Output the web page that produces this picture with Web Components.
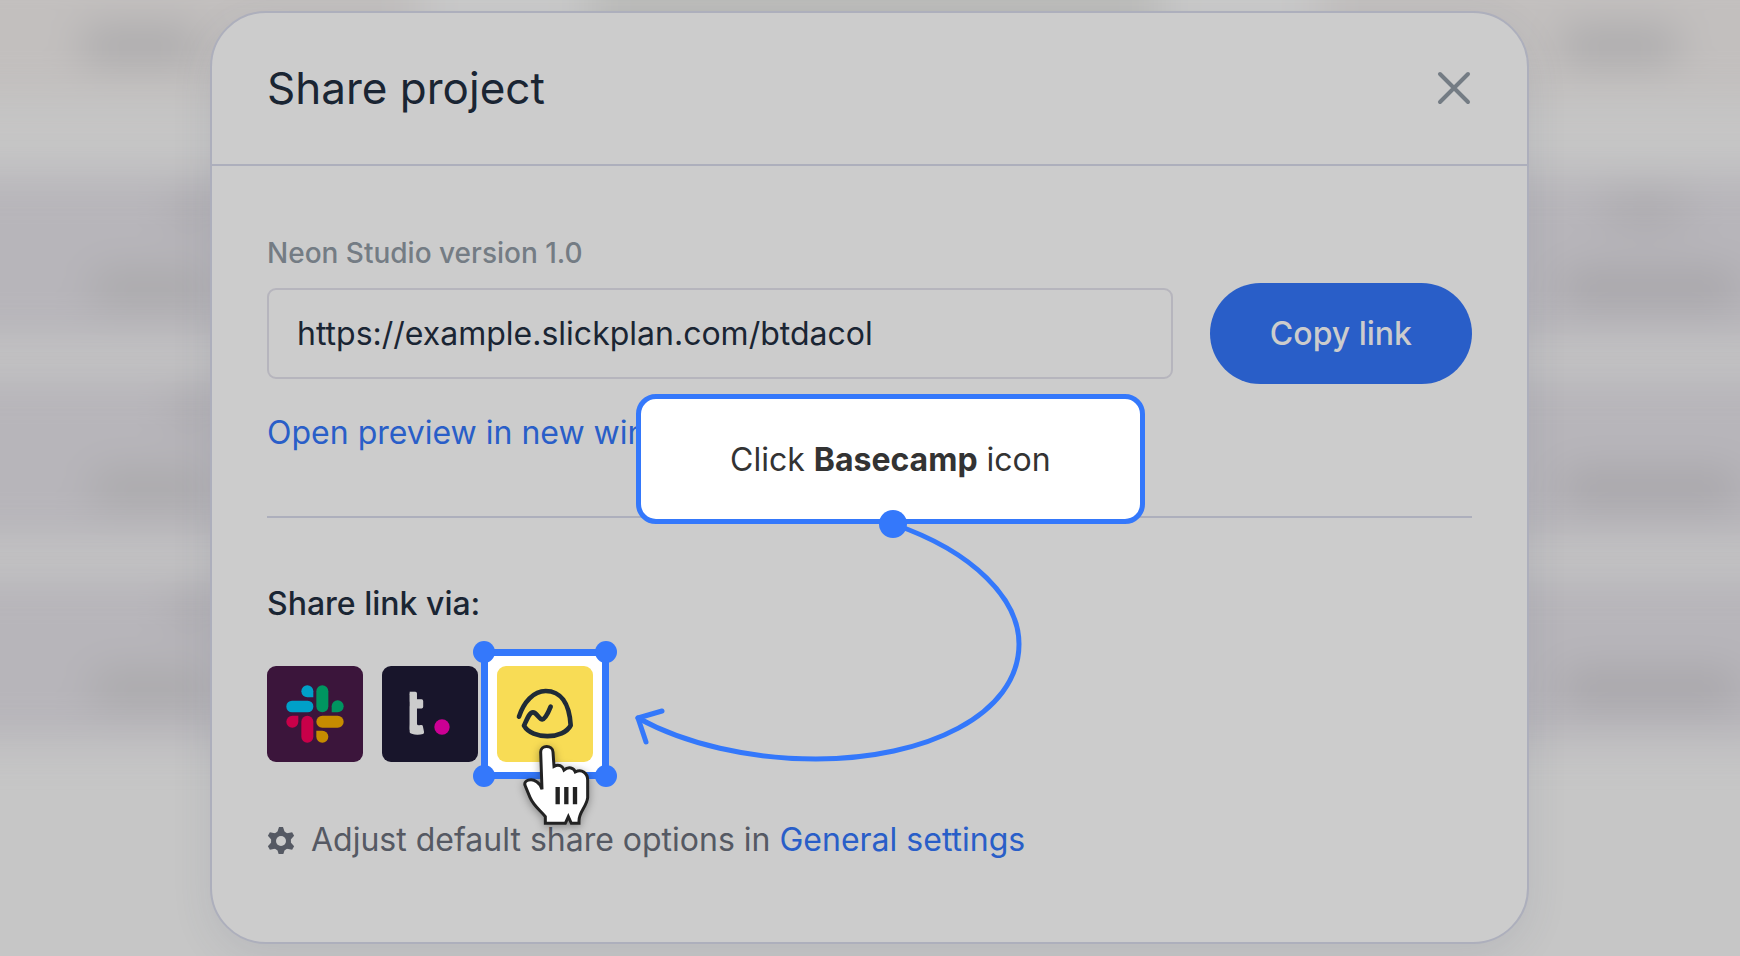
<!DOCTYPE html>
<html lang="en">
<head>
<meta charset="utf-8">
<title>Share project</title>
<style>
  body {
    margin: 0;
    min-height: 100vh;
    display: grid;
    background-color: #c6c6c6;
    font-family: Inter, "Liberation Sans", sans-serif;
    color: #1a2533;
  }
  page-backdrop, share-dialog {
    grid-area: 1 / 1;
  }
  share-dialog {
    margin: 11px 211px 12px 210px;
  }
</style>
</head>
<body>

<page-backdrop aria-hidden="true"></page-backdrop>

<share-dialog heading="Share project">
  <link-field label="Neon Studio version 1.0" value="https://example.slickplan.com/btdacol"></link-field>
  <share-apps heading="Share link via:">
    <app-tile app="slack"></app-tile>
    <app-tile app="teams"></app-tile>
    <app-tile app="basecamp" active></app-tile>
  </share-apps>
  <share-note>Adjust default share options in <a href="#settings">General settings</a></share-note>
  <tour-step slot="tour">Click <b>Basecamp</b> icon</tour-step>
</share-dialog>

<script>
function makeTemplate(html) {
  const template = document.createElement('template');
  template.innerHTML = html;
  return template;
}

// blurred page behind the dialog
const backdropTemplate = makeTemplate(`
<style>
  :host {
    display: block;
    overflow: hidden;
  }
  .page {
    filter: blur(20px);
    margin: -40px -60px 0;
  }
  .top {
    display: flex;
    justify-content: space-between;
    align-items: center;
    height: 140px;
    padding: 30px 120px 0 140px;
    box-sizing: border-box;
    background: linear-gradient(90deg, #c2bfbe 460px, #cacaca 500px, #cacaca 630px, #bcbcba 670px, #bcbcba 1200px, #cacaca 1240px, #cacaca 1360px, #c2bfbe 1400px);
  }
  .rows {
    display: flex;
    flex-direction: column;
    gap: 34px;
    padding-top: 75px;
  }
  .row {
    display: flex;
    justify-content: space-between;
    height: 166px;
    padding: 0 60px 0 150px;
    background-color: #b7b5ba;
  }
  .cell {
    display: flex;
    flex-direction: column;
    gap: 44px;
    padding-top: 18px;
  }
  .left {
    align-items: flex-end;
  }
  i {
    display: block;
    width: 120px;
    height: 34px;
    border-radius: 16px;
    background-color: #a9a8aa;
  }
  .faint {
    width: 40px;
    background-color: #acaaae;
  }
  .none {
    visibility: hidden;
  }
  .right i {
    width: 180px;
    background-color: #a6a4a8;
  }
  .right .faint {
    width: 90px;
    margin-left: 40px;
    background-color: #acaaae;
  }
</style>
<div class="page">
  <div class="top"><i></i><i></i></div>
  <div class="rows">
    <div class="row">
      <div class="cell left"><i class="faint"></i><i></i></div>
      <div class="cell right"><i class="faint"></i><i></i></div>
    </div>
    <div class="row">
      <div class="cell left"><i class="faint"></i><i></i></div>
      <div class="cell right"><i class="none"></i><i></i></div>
    </div>
    <div class="row">
      <div class="cell left"><i class="faint"></i><i></i></div>
      <div class="cell right"><i class="none"></i><i></i></div>
    </div>
  </div>
</div>
`);

customElements.define(
  "page-backdrop",
  class PageBackdrop extends HTMLElement {
    constructor() {
      super();
      this.attachShadow({ mode: "open" }).appendChild(backdropTemplate.content.cloneNode(true));
    }
  }
);

const dialogTemplate = makeTemplate(`
<style>
  :host {
    display: block;
    position: relative;
    box-sizing: border-box;
    border: 2px solid #adafbc;
    border-radius: 56px;
    background-color: #ccc;
    box-shadow: 0 12px 40px rgba(70, 75, 110, 0.1);
  }
  header {
    display: flex;
    justify-content: space-between;
    align-items: center;
    padding: 47px 55px 48px;
    border-bottom: 2px solid #adafbc;
  }
  h1 {
    margin: 0;
    font-size: 44px;
    line-height: 56px;
    font-weight: 400;
  }
  button {
    display: block;
    padding: 0;
    border: 0;
    background: none;
    color: #747c84;
  }
  button svg {
    display: block;
    width: 36px;
    height: 36px;
  }
  .body {
    padding: 70px 55px 82px;
  }
</style>
<header>
  <h1></h1>
  <button type="button" aria-label="Close">
    <svg viewBox="0 0 36 36" fill="none" stroke="currentColor" stroke-width="4" stroke-linecap="round">
      <path d="M4 4 L32 32 M32 4 L4 32"/>
    </svg>
  </button>
</header>
<div class="body"><slot></slot></div>
<slot name="tour"></slot>
`);

customElements.define(
  "share-dialog",
  class ShareDialog extends HTMLElement {
    constructor() {
      super();
      this.attachShadow({ mode: "open" }).appendChild(dialogTemplate.content.cloneNode(true));
    }

    connectedCallback() {
      this.setAttribute("role", "dialog");
      this.shadowRoot.querySelector("h1").textContent = this.getAttribute("heading");
    }
  }
);

const linkTemplate = makeTemplate(`
<style>
  :host {
    display: block;
    padding-bottom: 63px;
    border-bottom: 2px solid #adafbc;
  }
  label {
    display: block;
    margin-bottom: 13px;
    font-size: 28px;
    line-height: 34px;
    font-weight: 500;
    color: #747c84;
  }
  .row {
    display: flex;
    align-items: center;
    gap: 37px;
    margin-bottom: 29px;
  }
  input {
    flex: 1;
    min-width: 0;
    box-sizing: border-box;
    height: 91px;
    padding: 0 28px;
    border: 2px solid #b6b5bd;
    border-radius: 9px;
    background: none;
    color: inherit;
    font: 32px/40px Inter, "Liberation Sans", sans-serif;
  }
  button {
    height: 101px;
    padding: 0 60px;
    border: 0;
    border-radius: 51px;
    background-color: #295ec8;
    color: #ccc;
    font: 500 32px/40px Inter, "Liberation Sans", sans-serif;
  }
  a {
    font-size: 32px;
    line-height: 40px;
    color: #295ec8;
    text-decoration: none;
    display: inline-block;
    vertical-align: top;
  }
</style>
<label for="link"></label>
<div class="row">
  <input id="link" type="text" readonly>
  <button type="button">Copy link</button>
</div>
<a href="#preview">Open preview in new window</a>
`);

customElements.define(
  "link-field",
  class LinkField extends HTMLElement {
    constructor() {
      super();
      this.attachShadow({ mode: "open" }).appendChild(linkTemplate.content.cloneNode(true));
    }

    connectedCallback() {
      this.shadowRoot.querySelector("label").textContent = this.getAttribute("label");
      this.shadowRoot.querySelector("input").value = this.getAttribute("value");
    }
  }
);

const appsTemplate = makeTemplate(`
<style>
  :host {
    display: block;
    padding-top: 66px;
  }
  h2 {
    margin: 0 0 42px;
    font-size: 32px;
    line-height: 40px;
    font-weight: 500;
  }
  .tiles {
    display: flex;
    gap: 19px;
  }
</style>
<h2></h2>
<div class="tiles"><slot></slot></div>
`);

customElements.define(
  "share-apps",
  class ShareApps extends HTMLElement {
    constructor() {
      super();
      this.attachShadow({ mode: "open" }).appendChild(appsTemplate.content.cloneNode(true));
    }

    connectedCallback() {
      this.shadowRoot.querySelector("h2").textContent = this.getAttribute("heading");
    }
  }
);

const apps = {
  slack: {
    label: "Slack",
    color: "#3b153b",
    art: `
      <g fill="#00a0c8"><rect x="58" y="104" width="81" height="35" rx="17"/><path d="M139 94 H121 A18 18 0 1 1 139 76 Z"/></g>
      <g fill="#009560"><rect x="148" y="58" width="36" height="81" rx="18"/><path d="M194 139 V121 A18 18 0 1 1 212 139 Z"/></g>
      <g fill="#c80049"><rect x="103" y="149" width="36" height="81" rx="18"/><path d="M94 149 V167 A18 18 0 1 1 76 149 Z"/></g>
      <g fill="#c68c00"><rect x="148" y="149" width="82" height="36" rx="18"/><path d="M148 194 H166 A18 18 0 1 1 148 212 Z"/></g>`
  },
  teams: {
    label: "Teams",
    color: "#18152b",
    art: `
      <clipPath id="stem"><rect x="83" y="60" width="60" height="160" rx="10"/></clipPath>
      <text x="62" y="200" clip-path="url(#stem)" font-family="Inter" font-size="176" font-weight="600" fill="#ccc" stroke="#ccc" stroke-width="10" stroke-linejoin="round">t</text>
      <circle cx="180" cy="183" r="23" fill="#cc0094"/>`
  },
  basecamp: {
    label: "Basecamp",
    color: "#f8dc55",
    art: `
      <path fill="none" stroke="#1f2b37" stroke-width="14" stroke-linecap="round" stroke-linejoin="round"
        d="M66 152 C80 108 110 75 146 75 C190 75 217 110 221 178 C200 220 105 222 81 179 C92 155 98 139 108 139 C119 139 126 160 136 160 C143 160 153 142 161 122"/>`
  }
};

const tileTemplate = makeTemplate(`
<style>
  :host {
    display: block;
    position: relative;
  }
  button {
    display: block;
    position: relative;
    padding: 0;
    border: 0;
    border-radius: 9px;
    overflow: hidden;
  }
  button svg {
    display: block;
    width: 96px;
    height: 96px;
  }
  .frame, .cursor {
    display: none;
  }
  :host([active]) .frame {
    display: block;
    position: absolute;
    inset: -17px -16px;
    box-sizing: border-box;
    border: 7px solid #3478fb;
    background-color: #fff;
  }
  .frame i {
    position: absolute;
    width: 22px;
    height: 22px;
    border-radius: 50%;
    background-color: #3478fb;
  }
  .tl { top: -15px; left: -15px; }
  .tr { top: -15px; right: -15px; }
  .bl { bottom: -15px; left: -15px; }
  .br { bottom: -15px; right: -15px; }
  :host([active]) .cursor {
    display: block;
    position: absolute;
    top: 76px;
    left: 23px;
    width: 73px;
    height: 87px;
    overflow: visible;
    z-index: 2;
    filter: drop-shadow(0 2px 4px rgba(0, 0, 0, 0.35));
  }
</style>
<div class="frame"><i class="tl"></i><i class="tr"></i><i class="bl"></i><i class="br"></i></div>
<button type="button"><svg viewBox="0 0 288 288"></svg></button>
<svg class="cursor" viewBox="180 336 219 261" aria-hidden="true">
  <path fill="#fff" stroke="#222" stroke-width="9"
    d="M242 366 C242 344 278 344 279 366 L282 409 C296 401 308 408 312 420 C326 408 342 414 346 426 C366 416 383 430 383 450 L383 503 C380 530 357 546 357 572 L357 580 L334 580 L325 560 L316 580 L256 580 L256 560 C245 544 222 530 210 502 L195 466 C190 450 215 444 230 455 C238 460 243 468 246 478 Z"/>
  <path fill="none" stroke="#222" stroke-width="13" d="M293 471 V523 M319 471 V523 M345 471 V523"/>
</svg>
`);

customElements.define(
  "app-tile",
  class AppTile extends HTMLElement {
    constructor() {
      super();
      this.attachShadow({ mode: "open" }).appendChild(tileTemplate.content.cloneNode(true));
    }

    connectedCallback() {
      this.render();
    }

    render() {
      const app = apps[this.getAttribute("app")];
      const button = this.shadowRoot.querySelector("button");
      button.setAttribute("aria-label", app.label);
      button.style.backgroundColor = app.color;
      button.querySelector("svg").innerHTML = app.art;
    }
  }
);

const noteTemplate = makeTemplate(`
<style>
  :host {
    display: flex;
    align-items: center;
    gap: 16px;
    margin-top: 58px;
    font-size: 32px;
    line-height: 40px;
    color: #555963;
  }
  svg {
    width: 28px;
    height: 28px;
  }
  ::slotted(a) {
    color: #295ec8;
    text-decoration: none;
  }
</style>
<svg viewBox="-14 -15 28 28" fill="#555963" aria-hidden="true">
  <path d="M-4 -8 L-2 -14 H2 L4 -8 V8 L2 14 H-2 L-4 8 Z"/>
  <path d="M-4 -8 L-2 -14 H2 L4 -8 V8 L2 14 H-2 L-4 8 Z" transform="rotate(60)"/>
  <path d="M-4 -8 L-2 -14 H2 L4 -8 V8 L2 14 H-2 L-4 8 Z" transform="rotate(120)"/>
  <circle r="10"/>
  <circle r="5" fill="#ccc"/>
</svg>
<span><slot></slot></span>
`);

customElements.define(
  "share-note",
  class ShareNote extends HTMLElement {
    constructor() {
      super();
      this.attachShadow({ mode: "open" }).appendChild(noteTemplate.content.cloneNode(true));
    }
  }
);

// callout floating over the dialog, with its arrow towards the active tile
const tourTemplate = makeTemplate(`
<style>
  :host {
    display: block;
    position: absolute;
    top: 381px;
    left: 424px;
    color: #333;
  }
  .box {
    padding: 41px 89px 39px;
    border: 5px solid #3478fb;
    border-radius: 20px;
    background-color: #fff;
    font-size: 32px;
    line-height: 40px;
    white-space: nowrap;
  }
  svg {
    position: absolute;
    top: 0;
    left: 0;
    width: 510px;
    height: 380px;
    overflow: visible;
    pointer-events: none;
  }
</style>
<div class="box"><slot></slot></div>
<svg viewBox="636 394 510 380" fill="none" stroke="#3478fb" stroke-width="5" stroke-linecap="round" stroke-linejoin="round" aria-hidden="true">
  <path d="M893 524 C975 552 1019 600 1019 644 C1019 715 925 759 816 759 C750 759 685 744 638 718"/>
  <path d="M662 711 L638 718 L646 742"/>
  <circle cx="893" cy="524" r="14" fill="#3478fb" stroke="none"/>
</svg>
`);

customElements.define(
  "tour-step",
  class TourStep extends HTMLElement {
    constructor() {
      super();
      this.attachShadow({ mode: "open" }).appendChild(tourTemplate.content.cloneNode(true));
    }
  }
);
</script>
</body>
</html>
